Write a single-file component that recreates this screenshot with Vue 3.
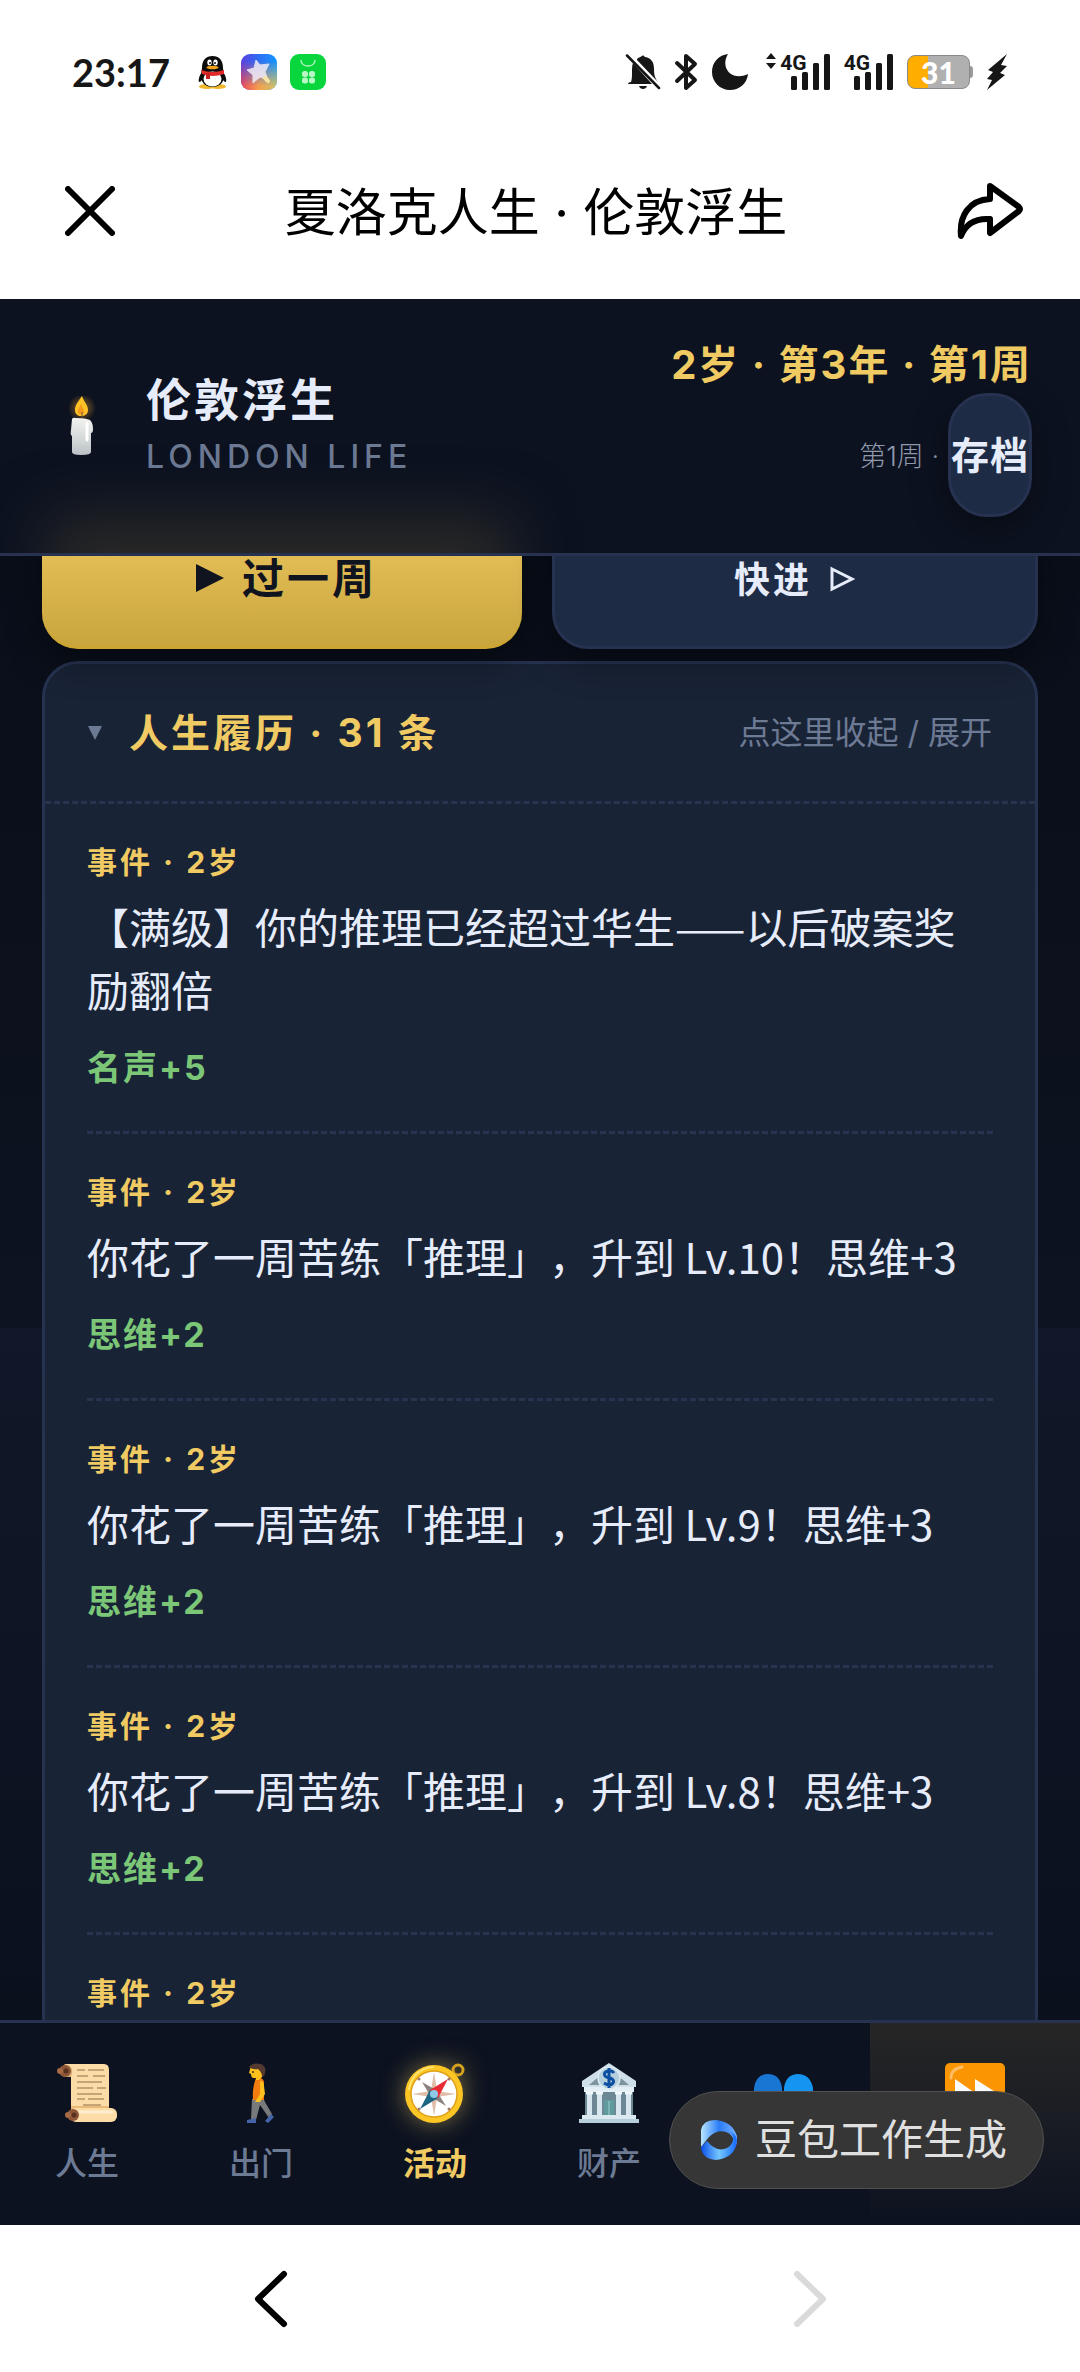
<template>
  <div class="phone">
    <div class="status-bar">
      <div class="status-left">
        <span class="time">23:17</span>
        <svg width="30" height="36" viewBox="0 0 30 36" class="penguin">
          <ellipse cx="9" cy="32.500" rx="8" ry="2.500" fill="#f0b62c" />
          <ellipse cx="20" cy="32.500" rx="8" ry="2.500" fill="#f0b62c" />
          <path d="M5 17 C2 20 0 25 1 28 C3 28 4 26 5 24 Z M24 17 C27 20 29 25 28 28 C26 28 25 26 24 24 Z" fill="#0b0b0b" />
          <path d="M4 14 C4 6 8 2 14.500 2 C21 2 25 6 25 14 L26 22 C26 29 21 33 14.500 33 C8 33 3 29 3 22 Z" fill="#0b0b0b" />
          <ellipse cx="14.500" cy="25" rx="9" ry="7.500" fill="#fff" />
          <ellipse cx="11.500" cy="8.500" rx="2.200" ry="3" fill="#fff" />
          <ellipse cx="17.500" cy="8.500" rx="2.200" ry="3" fill="#fff" />
          <circle cx="12" cy="9" r="1" fill="#111" />
          <circle cx="17" cy="9" r="1" fill="#111" />
          <ellipse cx="14.500" cy="13.500" rx="6" ry="1.800" fill="#f4a51c" />
          <path d="M3 16 Q14 20 26 16 L26 20 Q14 24 4 20 Z" fill="#e12a2a" />
          <path d="M8 19 h4 v6 h-4 Z" fill="#c91f1f" />
        </svg>
        <svg width="36" height="36" viewBox="0 0 36 36">
          <defs>
            <linearGradient id="wandA" x1="0" y1="0" x2="1" y2="0">
              <stop offset="0" stop-color="#5a3fe0" />
              <stop offset=".5" stop-color="#2f6ff2" />
              <stop offset="1" stop-color="#1496ff" />
            </linearGradient>
            <linearGradient id="wandB" x1="0" y1="0" x2="1" y2="0">
              <stop offset="0" stop-color="#e6465a" />
              <stop offset=".5" stop-color="#f6a04e" />
              <stop offset="1" stop-color="#c9c46a" />
            </linearGradient>
            <linearGradient id="wandM" x1="0" y1="0" x2="0" y2="1">
              <stop offset=".2" stop-color="#000" />
              <stop offset=".9" stop-color="#fff" />
            </linearGradient>
            <mask id="wandMask"><rect width="36" height="36" fill="url(#wandM)" /></mask>
          </defs>
          <rect width="36" height="36" rx="9" fill="url(#wandA)" />
          <rect width="36" height="36" rx="9" fill="url(#wandB)" mask="url(#wandMask)" />
          <path d="M15 6 L19 11 L28 10 L24 18 L27 26 L19 23 L12 29 L12 21 L6 16 L13 14 Z" fill="#f3ecf7" opacity=".85" stroke="#f3ecf7" stroke-width="1" stroke-linejoin="round" />
          <path d="M24 24 L27 27" stroke="#f7e3a2" stroke-width="4" stroke-linecap="round" />
        </svg>
        <svg width="36" height="36" viewBox="0 0 36 36">
          <rect width="36" height="36" rx="9" fill="#08d63c" />
          <path d="M11 6 C11 14 25 14 25 6" fill="none" stroke="#a9f5ba" stroke-width="1.500" />
          <g fill="#b9f8c6">
            <rect x="12" y="17" width="6" height="6" rx="2.500" /><rect x="19" y="17" width="6" height="6" rx="2.500" />
            <rect x="12" y="23.500" width="6" height="6" rx="2.500" /><rect x="19" y="23.500" width="6" height="6" rx="2.500" />
          </g>
        </svg>
      </div>
      <div class="status-right">
        <svg width="36" height="36" viewBox="0 0 36 36">
          <path d="M6 28 C4 28 3 29 3 30 H27 L8 9 C6 14 8 22 6 28 Z M12 5 C14 3 16 3 17 2 C18 1 19 2 20 3 C27 4 29 9 29 15 C29 21 30 24 33 28 L12 6 Z" fill="#161616" />
          <path d="M14 32 H22 C21 36 15 36 14 32 Z" fill="#161616" />
          <path d="M2 1.500 L34 34" stroke="#161616" stroke-width="2.500" stroke-linecap="round" />
        </svg>
        <svg width="24" height="38" viewBox="0 0 24 38">
          <path d="M3 10 L21 27 L12 35 V3 L21 11 L3 28" fill="none" stroke="#161616" stroke-width="4" stroke-linejoin="round" stroke-linecap="round" />
        </svg>
        <svg width="38" height="38" viewBox="0 0 38 38">
          <path d="M17 1 C9 14 20 29 37 21 C36 31 28 37 19 37 C9 37 1 29 1 19 C1 9 8 2 17 1 Z" fill="#161616" />
        </svg>
        <div v-for="(arrows, index) in [true, false]" :key="index" class="signal">
          <svg v-if="arrows" width="10" height="16" viewBox="0 0 10 16">
            <path d="M5 0 L10 6 H0 Z M5 16 L10 10 H0 Z" fill="#161616" />
          </svg>
          <div class="net">
            <span>4G</span>
            <svg width="40" height="38" viewBox="0 0 40 38" fill="#161616">
              <rect x="0" y="23" width="6" height="14" rx="1.500" />
              <rect x="11" y="19" width="6" height="18" rx="1.500" />
              <rect x="22" y="10" width="6" height="27" rx="1.500" />
              <rect x="33" y="1" width="6" height="36" rx="1.500" />
            </svg>
          </div>
        </div>
        <div class="battery">
          <span>31</span>
        </div>
        <svg width="22" height="36" viewBox="0 0 22 36">
          <path d="M21 0 L2 16 L7 18 L1 25 L6 26 L1 36 L19 21 L14 19 L21 12 L15 11 Z" fill="#161616" />
        </svg>
      </div>
    </div>

    <div class="title-bar">
      <button aria-label="关闭">
        <svg width="50" height="50" viewBox="0 0 50 50"><path d="M3 3 L47 47 M47 3 L3 47" stroke="#000" stroke-width="6" stroke-linecap="round" /></svg>
      </button>
      <h1>夏洛克人生 · 伦敦浮生</h1>
      <button aria-label="分享">
        <svg width="66" height="58" viewBox="0 0 66 58">
          <path d="M33 4 L62 25 Q64 27 62 29 L33 51 V37 C19 36 9 41 4 54 C2 34 12 18 33 17 Z" fill="none" stroke="#000" stroke-width="6" stroke-linejoin="round" />
        </svg>
      </button>
    </div>

    <header class="game-header">
      <div class="brand">
        <svg width="60" height="60" viewBox="0 0 60 60">
          <defs>
            <radialGradient id="halo"><stop offset="0" stop-color="#c98a28" stop-opacity=".7" /><stop offset="1" stop-color="#c98a28" stop-opacity="0" /></radialGradient>
            <linearGradient id="wax" x1="0" y1="0" x2="0" y2="1"><stop offset="0" stop-color="#f4f4f0" /><stop offset="1" stop-color="#bcc3c7" /></linearGradient>
          </defs>
          <circle cx="31" cy="12" r="14" fill="url(#halo)" />
          <path d="M31 0 C27 6 24 9 24 14 C24 18 27 20 30 20 C34 20 37 18 37 14 C37 9 33 6 31 0 Z" fill="#ffc227" />
          <path d="M30 8 C28 12 26 14 27 17 C28 19 33 19 33 16 C33 13 31 11 30 8 Z" fill="#f59a1d" />
          <path d="M31 16 V25" stroke="#6c5632" stroke-width="1" />
          <path d="M21 23 Q22 21 25 22 Q35 22 39 24 Q42 27 42 33 Q42 37 40 37 V56 Q40 59 30 59 Q21 59 21 56 V40 Q19 39 20 34 Z" fill="url(#wax)" />
          <path d="M36 27 V44" stroke="#fff" stroke-width="3" stroke-linecap="round" />
        </svg>
        <div>
          <div class="brand-name">伦敦浮生</div>
          <div class="brand-sub">LONDON LIFE</div>
        </div>
      </div>
      <div class="clock">
        <div class="date">2岁 · 第3年 · 第1周</div>
        <div class="save-row">
          <span>第1周 ·</span>
          <button class="save">存档</button>
        </div>
      </div>
    </header>

    <main>
      <div class="actions">
        <button class="next-week">
          <svg width="28" height="30" viewBox="0 0 28 30"><path d="M0 1 L28 15 L0 29 Z" fill="#10141f" /></svg>
          过一周
        </button>
        <button class="forward">
          快进
          <svg width="26" height="26" viewBox="0 0 26 26"><path d="M2 3 L22 13 L2 23 Z" fill="none" stroke="#e6ecfa" stroke-width="3" /></svg>
        </button>
      </div>

      <section class="card">
        <button class="card-head" @click="open = !open">
          <svg width="14" height="14" viewBox="0 0 14 14"><path d="M0 0 H14 L7 14 Z" fill="#6d7a94" /></svg>
          <span class="card-title">人生履历 · 31 条</span>
          <span class="hint">点这里收起 / 展开</span>
        </button>
        <ul v-if="open">
          <li v-for="(log, index) in logs" :key="index">
            <div class="log-tag">事件 · 2岁</div>
            <p v-if="log.text">{{ log.text }}</p>
            <div v-if="log.effect" class="log-effect">{{ log.effect }}</div>
          </li>
        </ul>
      </section>
    </main>

    <nav>
      <button class="tab">
        <svg width="60" height="60" viewBox="0 0 60 60">
          <path d="M8 1 H47 Q52 1 52 7 V48 H14 V14 H7 Q1 8 8 1 Z" fill="#fbdca6" />
          <path d="M8 1 Q18 3 14 14 H7 Z" fill="#d9ad74" />
          <path d="M14 43 H52 V46 H14 Z" fill="#eab978" />
          <rect x="13" y="45" width="47" height="14" rx="6" fill="#fddca7" />
          <path d="M22 49 H55" stroke="#ffedcf" stroke-width="3" stroke-linecap="round" />
          <circle cx="8" cy="8" r="6" fill="#8b5536" /><circle cx="3" cy="8" r="3" fill="#a66a45" /><circle cx="9" cy="8" r="2.500" fill="#57301f" />
          <circle cx="16" cy="52" r="6" fill="#8b5536" /><circle cx="11" cy="52" r="3" fill="#a66a45" /><circle cx="17" cy="52" r="2.500" fill="#57301f" />
          <path d="M20 7 h8 m3 0 h16 M20 13 h11 m5 0 h12 M20 19 h25 M20 25 h16 m4 0 h9 M20 31 h25 M20 36 h8 m3 0 h16 M26 42 h18" stroke="#b6906a" stroke-width="1.500" fill="none" />
        </svg>
        人生
      </button>
      <button class="tab">
        <svg width="60" height="60" viewBox="0 0 60 60">
          <path d="M21 36 L20 57 H25 L29 42 L38 55 L41 51 L34 39 L32 34 Z" fill="#78797b" />
          <path d="M25 15 Q32 14 33 19 V37 H22 Q21 25 25 15 Z" fill="#f57c0f" />
          <path d="M29 18 Q33 18 33 23 L34 31 L29 39 H24 L29 31 Z" fill="#fcbf1d" />
          <path d="M20 3 H31 V14 L28 17 H25 V15 H22 Q20 14 20 11 L18 10 Z" fill="#fcc21b" />
          <path d="M18 4 Q22 -1 30 1 Q36 4 34 10 Q34 13 31 14 Q31 9 27 6 Q22 7 18 4 Z" fill="#543930" />
          <path d="M16 57 L25 55 V60 H16 Z M34 58 L40 51 L43 54 L37 60 Z" fill="#4565a8" />
          <circle cx="22" cy="9" r="1" fill="#3b3028" />
        </svg>
        出门
      </button>
      <button class="tab active">
        <svg width="60" height="60" viewBox="0 0 60 60">
          <circle cx="53" cy="7" r="5" fill="none" stroke="#d5a31f" stroke-width="3" />
          <circle cx="29" cy="31" r="29" fill="#fcc624" />
          <path d="M4 26 Q8 6 28 4" fill="none" stroke="#ffe36d" stroke-width="2" stroke-linecap="round" />
          <circle cx="29" cy="31" r="23" fill="#fff" stroke="#dfa11b" stroke-width="1.500" />
          <path d="M29 9 L32 28 L51 31 L32 34 L29 53 L26 34 L7 31 L26 28 Z" fill="#dfbda8" />
          <path d="M17 19 L31 27 L41 43 L26 34 Z" fill="#8d837c" />
          <path d="M43 16 L33 35 L25 27 Z" fill="#e92c33" />
          <path d="M15 46 L25 27 L33 35 Z" fill="#1d6683" />
          <circle cx="29" cy="31" r="4" fill="#8fc9e8" />
          <g fill="#a17864"><circle cx="14" cy="16" r="1.500" /><circle cx="44" cy="16" r="1.500" /><circle cx="14" cy="46" r="1.500" /><circle cx="44" cy="46" r="1.500" /></g>
        </svg>
        活动
      </button>
      <button class="tab">
        <svg width="60" height="60" viewBox="0 0 60 60">
          <path d="M6 27 H54 V53 H6 Z" fill="#6d8794" />
          <path d="M30 0 L57 18 V24 H3 V18 Z" fill="#cfdfe9" />
          <path d="M30 5 L50 22 H10 Z" fill="#7d949f" />
          <rect x="5" y="24" width="50" height="5" fill="#e3eef5" />
          <circle cx="30" cy="15" r="11" fill="#b6cfdd" stroke="#dcebf3" stroke-width="1.500" />
          <path d="M35 10 Q33 7 29 8 Q24 9 26 13 Q28 15 31 15 Q36 17 34 20 Q31 24 25 20 M30 5 V25" fill="none" stroke="#0c4ea2" stroke-width="3" />
          <g fill="#d7e6ef"><rect x="8" y="29" width="5" height="24" /><rect x="18" y="29" width="5" height="24" /><rect x="37" y="29" width="5" height="24" /><rect x="47" y="29" width="5" height="24" /></g>
          <path d="M7 30 H14 M17 30 H24 M36 30 H43 M46 30 H53" stroke="#eff7fb" stroke-width="3" />
          <rect x="25" y="37" width="10" height="16" fill="#5f9a9d" /><path d="M30 38 V53" stroke="#9fd0d0" stroke-width="1" />
          <rect x="3" y="52" width="54" height="4" fill="#dbe9f1" /><rect x="0" y="56" width="60" height="4" fill="#b7cedb" />
        </svg>
        财产
      </button>
      <button class="tab" aria-label="人脉">
        <svg width="60" height="60" viewBox="0 0 60 60">
          <path d="M1 60 V25 Q3 11 15 11 Q27 11 29 25 V60 Z" fill="#1976d2" />
          <path d="M31 60 V25 Q33 11 45 11 Q57 11 60 25 V60 Z" fill="#1595ef" />
        </svg>
      </button>
      <button class="tab fast" aria-label="快进">
        <svg width="60" height="60" viewBox="0 0 60 60">
          <rect width="60" height="60" rx="5" fill="#fc9502" />
          <path d="M6 15 Q6 6 17 4" fill="none" stroke="#ffbd63" stroke-width="3" stroke-linecap="round" />
          <path d="M10 16 L30 30 V16 L52 30 L30 45 V31 L10 45 Z" fill="#fafafa" />
        </svg>
      </button>
      <a href="#" class="badge">
        <svg width="36" height="40" viewBox="0 0 36 40">
          <defs>
            <linearGradient id="loopA" x1="0" y1="0" x2="1" y2="0"><stop offset="0" stop-color="#b8e6ff" /><stop offset=".5" stop-color="#2b7cf8" /><stop offset="1" stop-color="#78b4ff" /></linearGradient>
            <linearGradient id="loopB" x1="0" y1="0" x2="1" y2="0"><stop offset="0" stop-color="#0b4fe8" /><stop offset=".5" stop-color="#74c7ff" /><stop offset="1" stop-color="#1668ff" /></linearGradient>
          </defs>
          <path d="M0 27 V10 Q2 0 14 0 Q31 1 36 16 Q37 20 35 25 Q32 14 25 12 Q16 9 8 17 Z" fill="url(#loopA)" />
          <path d="M0 27 L6 21 Q16 33 26 28 Q33 24 32 17 Q31 12 25 11 Q36 12 36 21 Q34 38 15 40 Q1 39 0 27 Z" fill="url(#loopB)" />
        </svg>
        豆包工作生成
      </a>
    </nav>

    <div class="browser-bar">
      <button aria-label="后退">
        <svg width="34" height="58" viewBox="0 0 34 58"><path d="M30 4 L4 29 L30 54" fill="none" stroke="#000" stroke-width="6" stroke-linecap="round" stroke-linejoin="round" /></svg>
      </button>
      <button aria-label="前进" disabled>
        <svg width="34" height="58" viewBox="0 0 34 58"><path d="M4 4 L30 29 L4 54" fill="none" stroke="#dadada" stroke-width="6" stroke-linecap="round" stroke-linejoin="round" /></svg>
      </button>
    </div>
  </div>
</template>

<script setup>
import { ref } from 'vue';

const open = ref(true);

const logs = ref([
  { text: '【满级】你的推理已经超过华生——以后破案奖励翻倍', effect: '名声+5' },
  { text: '你花了一周苦练「推理」，升到 Lv.10！思维+3', effect: '思维+2' },
  { text: '你花了一周苦练「推理」，升到 Lv.9！思维+3', effect: '思维+2' },
  { text: '你花了一周苦练「推理」，升到 Lv.8！思维+3', effect: '思维+2' },
  { text: '', effect: '' },
]);
</script>

<style>
body {
  margin: 0;
  background: #fff;
}
</style>

<style scoped>
.phone {
  display: flex;
  flex-direction: column;
  height: 100vh;
  overflow: hidden;
  font-family: Inter, "Noto Sans CJK SC", sans-serif;
  text-spacing-trim: space-all;
  background: #fff;
}
button {
  font-family: inherit;
  border: none;
  background: none;
  padding: 0;
  margin: 0;
  cursor: pointer;
}
svg {
  display: block;
  flex: none;
}
.status-bar {
  display: flex;
  justify-content: space-between;
  align-items: center;
  height: 104px;
  padding: 20px 72px 0;
}
.status-left,
.status-right {
  display: flex;
  align-items: center;
  gap: 13px;
}
.time {
  font-family: Lato, sans-serif;
  font-size: 38px;
  font-weight: 700;
  line-height: 48px;
  color: #161616;
}
.penguin {
  margin-left: 15px;
}
.signal {
  display: flex;
  align-items: flex-start;
  gap: 4px;
  margin-left: 4px;
}
.signal + .signal {
  margin-left: 0;
}
.net {
  display: flex;
}
.net span {
  margin-right: -16px;
  font-family: "Liberation Sans Narrow", Roboto, sans-serif;
  font-size: 21px;
  font-weight: 700;
  line-height: 20px;
  color: #161616;
}
.battery {
  position: relative;
  width: 61px;
  height: 32px;
  margin-right: 3px;
  border: 1px solid #8a8a8a;
  border-radius: 8px;
  background: linear-gradient(90deg, #ffae00 20px, #b0b0b0 20px);
  font-family: Lato, sans-serif;
  font-size: 30px;
  font-weight: 900;
  line-height: 32px;
  text-align: center;
  color: #fff;
}
.battery::after {
  content: "";
  position: absolute;
  top: 10px;
  right: -4px;
  width: 3px;
  height: 12px;
  border-radius: 0 3px 3px 0;
  background: #9a9a9a;
}
.title-bar {
  display: flex;
  justify-content: space-between;
  align-items: center;
  height: 173px;
  padding: 0 57px 2px 65px;
}
.title-bar h1 {
  margin: 0;
  padding-top: 4px;
  font-size: 51px;
  font-weight: 400;
  line-height: 72px;
  color: #000;
}

.game-header {
  position: relative;
  display: flex;
  justify-content: space-between;
  align-items: center;
  height: 254px;
  padding: 0 48px 0 51px;
  overflow: hidden;
  background: #0c1220;
  border-bottom: 3px solid #263250;
}
/* light of the gold button shining through the header */
.game-header::after {
  content: "";
  position: absolute;
  left: 84px;
  right: 56%;
  bottom: -20px;
  height: 20px;
  box-shadow: 0 0 60px 36px rgba(58, 54, 44, 0.65);
}
.brand {
  display: flex;
  align-items: center;
  gap: 35px;
}
.brand-name {
  font-size: 45px;
  font-weight: 700;
  line-height: 60px;
  letter-spacing: 3px;
  color: #e6ecfa;
}
.brand-sub {
  font-size: 32px;
  font-weight: 500;
  line-height: 51px;
  letter-spacing: 5px;
  color: #6d7a94;
}
.clock {
  display: flex;
  flex-direction: column;
  align-items: flex-end;
}
.date {
  font-size: 40px;
  font-weight: 700;
  line-height: 57px;
  letter-spacing: 2px;
  color: #f0ca62;
}
.save-row {
  display: flex;
  align-items: center;
  gap: 9px;
  font-size: 27px;
  font-weight: 300;
  color: #9099ac;
}
.save {
  display: flex;
  justify-content: center;
  align-items: center;
  width: 84px;
  height: 124px;
  border: 3px solid #263250;
  border-radius: 39px;
  background: #1e2b45;
  box-shadow: 0 12px 36px rgba(0, 0, 0, 0.4);
  font-size: 38px;
  font-weight: 700;
  letter-spacing: 1px;
  line-height: 48px;
  white-space: nowrap;
  color: #e6ecfa;
}

main {
  flex: 1;
  min-height: 0;
  overflow: hidden;
  padding: 0 42px;
  background: linear-gradient(#090e19, #0d1320 52.700%, #101829 52.700%, #0b101d);
}
.actions {
  display: grid;
  grid-template-columns: 480fr 486fr;
  gap: 30px;
  margin-top: -51px;
}
.actions button {
  display: flex;
  justify-content: center;
  align-items: center;
  gap: 18px;
  height: 144px;
  border-radius: 36px;
  font-weight: 700;
  letter-spacing: 3px;
  box-shadow: 0 12px 36px rgba(0, 0, 0, 0.4);
}
.actions svg {
  margin-top: 4px;
}
.actions .next-week {
  padding-left: 9px;
  background: linear-gradient(#f0ca62, #c9a53d);
  border-bottom: 3px solid #cda532;
  font-size: 42px;
  color: #10141f;
}
.actions .forward {
  background: #1e2b45;
  border: 3px solid #263250;
  font-size: 36px;
  color: #e6ecfa;
}
.card {
  margin-top: 12px;
  border: 3px solid #263250;
  border-radius: 36px;
  background: #192336;
}
.card-head {
  display: flex;
  align-items: center;
  width: 100%;
  padding: 36px 43px;
  border-bottom: 3px dashed #28334f;
  line-height: 65px;
}
.card-title {
  margin-left: 27px;
  font-size: 39px;
  font-weight: 700;
  letter-spacing: 3px;
  color: #f0ca62;
}
.hint {
  margin-left: auto;
  font-size: 32px;
  color: #6d7a94;
}
ul {
  list-style: none;
  margin: 0;
  padding: 0 42px;
}
li {
  min-height: 192px;
  padding: 36px 0;
  border-bottom: 3px dashed #28334f;
}
.log-tag {
  font-size: 30px;
  font-weight: 700;
  line-height: 45px;
  letter-spacing: 3px;
  color: #f0ca62;
}
li p {
  margin: 9px 0 21px;
  font-family: "Noto Sans CJK SC", sans-serif;
  font-size: 42px;
  font-weight: 400;
  line-height: 63px;
  color: #e6ecfa;
}
.log-effect {
  font-size: 34px;
  font-weight: 700;
  line-height: 54px;
  letter-spacing: 2px;
  color: #7bc777;
}

nav {
  position: relative;
  display: grid;
  grid-template-columns: repeat(5, 174fr) 210fr;
  height: 202px;
  border-top: 3px solid #263250;
  background: #0c1220;
}
.tab {
  display: flex;
  flex-direction: column;
  align-items: center;
  gap: 18px;
  padding-top: 40px;
  font-size: 32px;
  font-weight: 500;
  line-height: 45px;
  color: #6d7a94;
}
.tab.active {
  font-weight: 700;
  color: #f0ca62;
}
.tab.active svg {
  filter: drop-shadow(0 0 12px rgba(240, 202, 98, 0.5));
}
.tab.fast {
  background: linear-gradient(#262626, #0c1220);
}
.badge {
  position: absolute;
  right: 36px;
  bottom: 36px;
  display: flex;
  align-items: center;
  gap: 18px;
  padding: 0 36px 0 31px;
  border: 1px solid #505050;
  border-radius: 49px;
  background: #363636;
  font-size: 42px;
  line-height: 96px;
  color: #e0e0e0;
  text-decoration: none;
}
.browser-bar {
  display: flex;
  justify-content: space-between;
  align-items: center;
  height: 147px;
  padding: 0 253px 0 254px;
}
</style>
